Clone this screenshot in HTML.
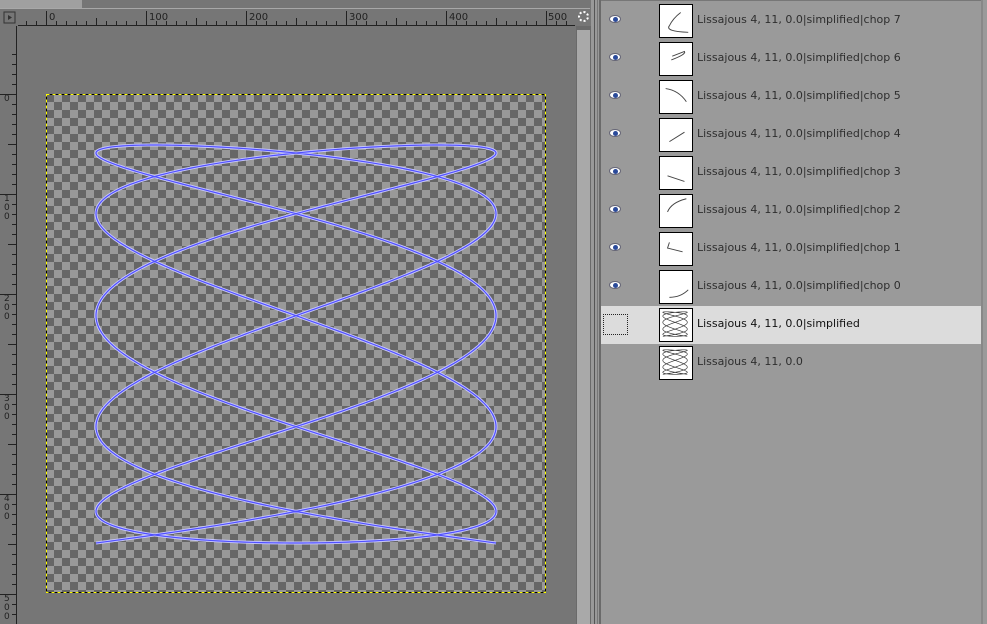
<!DOCTYPE html>
<html><head><meta charset="utf-8"><style>
*{margin:0;padding:0;box-sizing:border-box}
body{width:987px;height:624px;overflow:hidden;background:#767676;position:relative;font-family:"DejaVu Sans","Liberation Sans",sans-serif}
.abs{position:absolute}
.row{position:absolute;left:601px;width:380px;height:38px}
.eye{position:absolute;left:8px;top:13px;width:12px;height:8px;border-radius:50%;background:#fff;border:1px solid #667}
.eye:after{content:"";position:absolute;left:3px;top:1px;width:5px;height:5px;border-radius:50%;background:#2a4a9a}
.th{position:absolute;left:58px;top:2px;width:34px;height:34px;background:#fff;border:1px solid #000}
.lbl{position:absolute;left:96px;top:11px;font-size:11px;color:#2e2e2e;white-space:nowrap}
</style></head><body>
<div class="abs" style="left:0;top:0;width:82px;height:9px;background:#a0a0a0"></div>
<div class="abs" style="left:0;top:8px;width:590px;height:1px;background:#a8a8a8"></div>
<svg class="abs" style="left:0;top:9px" width="592" height="20">
<rect x="4" y="3" width="11" height="11" fill="none" stroke="#333"/><path d="M8 6 L12 8.5 L8 11Z" fill="#333"/>
<line x1="18" y1="16.5" x2="575" y2="16.5" stroke="#222"/>
<g stroke="#222" id="tt"></g>
<g font-size="10" fill="#222" font-family="DejaVu Sans,sans-serif">
<text x="49" y="11">0</text><text x="149" y="11">100</text><text x="249" y="11">200</text><text x="349" y="11">300</text><text x="449" y="11">400</text><text x="548" y="11">500</text></g>
</svg>
<svg class="abs" style="left:0;top:26px" width="18" height="598">
<line x1="16.5" y1="0" x2="16.5" y2="598" stroke="#222"/>
<g stroke="#222" id="lt"></g>
<g font-size="9" fill="#222" font-family="DejaVu Sans,sans-serif" id="ll"></g>
</svg>
<div class="abs" style="left:576px;top:26px;width:15px;height:598px;background:#6a6a6a"></div>
<div class="abs" style="left:577px;top:30px;width:13px;height:594px;background:#a9a9a9"></div>
<div class="abs" style="left:578px;top:11px;width:11px;height:11px;border:2px dotted #fff;border-radius:50%"></div>
<div class="abs" style="left:591px;top:0;width:10px;height:624px;background:#999"></div>
<div class="abs" style="left:594px;top:0;width:1px;height:624px;background:#555"></div>
<div class="abs" style="left:597px;top:0;width:1px;height:624px;background:#777"></div>
<div class="abs" style="left:599px;top:0;width:2px;height:624px;background:#6a6a6a"></div>
<div class="abs" style="left:601px;top:0;width:386px;height:624px;background:#9a9a9a"></div>
<div class="abs" style="left:981px;top:0;width:2px;height:624px;background:#888"></div>
<div class="abs" style="left:601px;top:0;width:380px;height:1px;background:#777"></div>
<svg class="abs" style="left:46px;top:94px" width="500" height="499">
<defs><pattern id="ck" width="16" height="16" patternUnits="userSpaceOnUse">
<rect width="16" height="16" fill="#999"/><rect width="8" height="8" fill="#666"/><rect x="8" y="8" width="8" height="8" fill="#666"/></pattern></defs>
<rect width="500" height="499" fill="url(#ck)"/>
<rect x="0.5" y="0.5" width="499" height="498" fill="none" stroke="#ff0" stroke-dasharray="3 3"/>
<rect x="0.5" y="0.5" width="499" height="498" fill="none" stroke="#000" stroke-dasharray="3 3" stroke-dashoffset="3"/>
<path id="c1" fill="none" stroke="#c8c8ff" stroke-width="3"/>
<path id="c2" fill="none" stroke="#5050ff" stroke-width="1.2"/>
</svg>
<div id="rows"></div>
<script>
(function(){
var d="";for(var i=0;i<=1200;i++){var u=Math.PI*i/1200;var x=250+200*Math.cos(11*u),y=250+199*Math.cos(4*u);d+=(i?"L":"M")+x.toFixed(2)+" "+y.toFixed(2);}
document.getElementById("c1").setAttribute("d",d);document.getElementById("c2").setAttribute("d",d);
var tt="";for(var x=46;x<575;x+=10){var h=(x-46)%100==0?14:((x-46)%50==0?7:4);tt+='<line x1="'+(x+.5)+'" y1="'+(16-h)+'" x2="'+(x+.5)+'" y2="16"/>';}
for(var x=36;x>18;x-=10)tt+='<line x1="'+(x+.5)+'" y1="12" x2="'+(x+.5)+'" y2="16"/>';
document.getElementById("tt").innerHTML=tt;
var lt="",ll="";for(var y=94-26-40;y<598;y+=10){if(y<0)continue;var v=y-(94-26);var h=(v%100==0)?16:(v%50==0?8:4);lt+='<line x1="'+(16-h)+'" y1="'+(y+.5)+'" x2="16" y2="'+(y+.5)+'"/>';}
document.getElementById("lt").innerHTML=lt;
var labs=["0","100","200","300","400","500"];for(var k=0;k<6;k++){var y0=94-26+100*k-1;var s=labs[k];for(var j=0;j<s.length;j++)ll+='<text x="4" y="'+(y0+8+j*9)+'">'+s[j]+'</text>';}
document.getElementById("ll").innerHTML=ll;
var thumbs=["M10 22 Q5 28 30 29 M10 22 Q14 14 22 8","M13 14 L26 9 Q28 12 12 18","M6 8 Q20 10 28 22","M10 24 L26 14","M8 20 L26 26","M8 18 Q12 8 28 4","M10 10 L8 16 L24 20","M10 28 Q22 28 30 20"];
var r="";for(var i=0;i<10;i++){var ty=2+38*i;var sel=i==8;
r+='<div class="row" style="top:'+ty+'px;'+(sel?'background:#dcdcdc':'')+'">';
if(i<8)r+='<div class="eye"></div>';
if(sel)r+='<div style="position:absolute;left:2px;top:8px;width:25px;height:21px;border:1px dotted #222"></div>';
r+='<svg class="th" viewBox="0 0 34 34">';
if(i<8)r+='<path d="'+thumbs[i]+'" fill="none" stroke="#444" stroke-width="1"/>';
else{var p="";for(var k=0;k<=300;k++){var u=Math.PI*k/300;p+=(k?"L":"M")+(16+13*Math.cos(11*u)).toFixed(2)+" "+(16+13*Math.cos(4*u)).toFixed(2);}r+='<path d="'+p+'" fill="none" stroke="#333" stroke-width="0.7"/>';}
r+='</svg>';
var t=i<8?"Lissajous 4, 11, 0.0|simplified|chop "+(7-i):(i==8?"Lissajous 4, 11, 0.0|simplified":"Lissajous 4, 11, 0.0");
r+='<div class="lbl" style="'+(sel?'color:#111':'')+'">'+t+'</div></div>';}
document.getElementById("rows").innerHTML=r;
})();
</script>
</body></html>
